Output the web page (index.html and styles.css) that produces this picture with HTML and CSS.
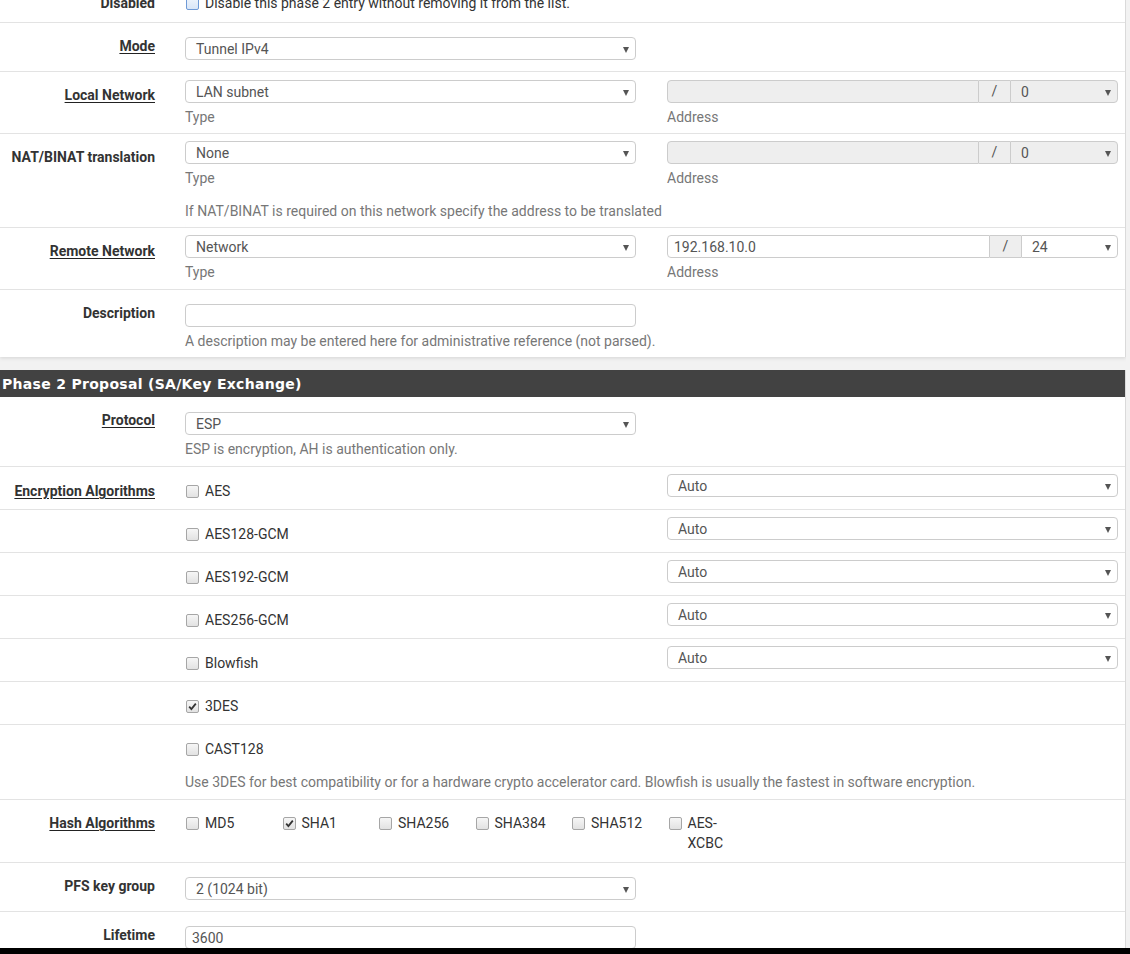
FILE: index.html
```html
<!DOCTYPE html>
<html>
<head>
<meta charset="utf-8">
<link rel="stylesheet" href="styles.css">
</head>
<body>
<div class="wrap">
  <div class="panel p1">
    <div class="row r-dis">
      <div class="lbl">Disabled</div>
      <div class="ctl">
        <div class="chk"><span class="box focus"></span><span class="txt">Disable this phase 2 entry without removing it from the list.</span></div>
      </div>
    </div>
    <div class="row">
      <div class="lbl"><span class="ul">Mode</span></div>
      <div class="ctl c-single">
        <div class="col"><div class="sel"><span>Tunnel IPv4</span><i class="arr"></i></div></div>
      </div>
    </div>
    <div class="row">
      <div class="lbl"><span class="ul">Local Network</span></div>
      <div class="ctl c-local">
        <div class="pair">
          <div class="col">
            <div class="sel"><span>LAN subnet</span><i class="arr"></i></div>
            <div class="help">Type</div>
          </div>
          <div class="col">
            <div class="grp">
              <div class="inp dis"></div>
              <div class="addon">/</div>
              <div class="sel dis w108"><span>0</span><i class="arr"></i></div>
            </div>
            <div class="help">Address</div>
          </div>
        </div>
      </div>
    </div>
    <div class="row">
      <div class="lbl">NAT/BINAT translation</div>
      <div class="ctl c-nat">
        <div class="pair">
          <div class="col">
            <div class="sel"><span>None</span><i class="arr"></i></div>
            <div class="help">Type</div>
          </div>
          <div class="col">
            <div class="grp">
              <div class="inp dis"></div>
              <div class="addon">/</div>
              <div class="sel dis w108"><span>0</span><i class="arr"></i></div>
            </div>
            <div class="help">Address</div>
          </div>
        </div>
        <div class="help help-gap">If NAT/BINAT is required on this network specify the address to be translated</div>
      </div>
    </div>
    <div class="row">
      <div class="lbl"><span class="ul">Remote Network</span></div>
      <div class="ctl c-remote">
        <div class="pair">
          <div class="col">
            <div class="sel"><span>Network</span><i class="arr"></i></div>
            <div class="help">Type</div>
          </div>
          <div class="col">
            <div class="grp">
              <div class="inp">192.168.10.0</div>
              <div class="addon">/</div>
              <div class="sel w97"><span>24</span><i class="arr"></i></div>
            </div>
            <div class="help">Address</div>
          </div>
        </div>
      </div>
    </div>
    <div class="row last">
      <div class="lbl">Description</div>
      <div class="ctl c-desc">
        <div class="col"><div class="inp"></div></div>
        <div class="help">A description may be entered here for administrative reference (not parsed).</div>
      </div>
    </div>
  </div>

  <div class="panel p2">
    <div class="phead">Phase 2 Proposal (SA/Key Exchange)</div>
    <div class="row">
      <div class="lbl"><span class="ul">Protocol</span></div>
      <div class="ctl c-proto">
        <div class="col"><div class="sel"><span>ESP</span><i class="arr"></i></div></div>
        <div class="help">ESP is encryption, AH is authentication only.</div>
      </div>
    </div>
    <div class="row">
      <div class="lbl lbl-enc"><span class="ul">Encryption Algorithms</span></div>
      <div class="ctl c-enc">
        <div class="pair">
          <div class="col"><div class="chk"><span class="box"></span><span class="txt">AES</span></div></div>
          <div class="col"><div class="sel"><span>Auto</span><i class="arr"></i></div></div>
        </div>
      </div>
    </div>
    <div class="row">
      <div class="lbl"></div>
      <div class="ctl c-enc">
        <div class="pair">
          <div class="col"><div class="chk"><span class="box"></span><span class="txt">AES128-GCM</span></div></div>
          <div class="col"><div class="sel"><span>Auto</span><i class="arr"></i></div></div>
        </div>
      </div>
    </div>
    <div class="row">
      <div class="lbl"></div>
      <div class="ctl c-enc">
        <div class="pair">
          <div class="col"><div class="chk"><span class="box"></span><span class="txt">AES192-GCM</span></div></div>
          <div class="col"><div class="sel"><span>Auto</span><i class="arr"></i></div></div>
        </div>
      </div>
    </div>
    <div class="row">
      <div class="lbl"></div>
      <div class="ctl c-enc">
        <div class="pair">
          <div class="col"><div class="chk"><span class="box"></span><span class="txt">AES256-GCM</span></div></div>
          <div class="col"><div class="sel"><span>Auto</span><i class="arr"></i></div></div>
        </div>
      </div>
    </div>
    <div class="row">
      <div class="lbl"></div>
      <div class="ctl c-enc">
        <div class="pair">
          <div class="col"><div class="chk"><span class="box"></span><span class="txt">Blowfish</span></div></div>
          <div class="col"><div class="sel"><span>Auto</span><i class="arr"></i></div></div>
        </div>
      </div>
    </div>
    <div class="row">
      <div class="lbl"></div>
      <div class="ctl c-chkonly">
        <div class="chk"><span class="box"><svg viewBox="0 0 11 11" width="11" height="11"><path d="M2.2 5.6 L4.4 8 L8.8 2.6" fill="none" stroke="#333" stroke-width="1.8"/></svg></span><span class="txt">3DES</span></div>
      </div>
    </div>
    <div class="row">
      <div class="lbl"></div>
      <div class="ctl c-cast">
        <div class="chk"><span class="box"></span><span class="txt">CAST128</span></div>
        <div class="help help-gap">Use 3DES for best compatibility or for a hardware crypto accelerator card. Blowfish is usually the fastest in software encryption.</div>
      </div>
    </div>
    <div class="row">
      <div class="lbl"><span class="ul">Hash Algorithms</span></div>
      <div class="ctl c-hash">
        <div class="hash">
          <div class="chk"><span class="box"></span><span class="txt">MD5</span></div>
          <div class="chk"><span class="box"><svg viewBox="0 0 11 11" width="11" height="11"><path d="M2.2 5.6 L4.4 8 L8.8 2.6" fill="none" stroke="#333" stroke-width="1.8"/></svg></span><span class="txt">SHA1</span></div>
          <div class="chk"><span class="box"></span><span class="txt">SHA256</span></div>
          <div class="chk"><span class="box"></span><span class="txt">SHA384</span></div>
          <div class="chk"><span class="box"></span><span class="txt">SHA512</span></div>
          <div class="chk narrow"><span class="box"></span><span class="txt">AES-XCBC</span></div>
        </div>
      </div>
    </div>
    <div class="row">
      <div class="lbl">PFS key group</div>
      <div class="ctl c-single">
        <div class="col"><div class="sel"><span>2 (1024 bit)</span><i class="arr"></i></div></div>
      </div>
    </div>
    <div class="row last r-life">
      <div class="lbl">Lifetime</div>
      <div class="ctl c-life">
        <div class="col"><div class="inp">3600</div></div>
      </div>
    </div>
  </div>
</div>
<div class="bar"></div>
</body>
</html>
```
FILE: styles.css
```css
* { box-sizing: border-box; }
html, body { margin: 0; padding: 0; }
body {
  background: #f2f2f2;
  font-family: Roboto, "Liberation Sans", Arial, sans-serif;
  font-size: 14px;
  line-height: 20px;
  color: #333;
  overflow: hidden;
  height: 954px;
}
.wrap { width: 1126px; height: 948px; overflow: hidden; }
.panel { background: #fff; border-right: 1px solid #dadada; }
.p1 { box-shadow: 0 1px 4px rgba(0, 0, 0, 0.13); margin-bottom: 13px; }
.phead {
  height: 27px;
  background: #424242;
  color: #fff;
  font-family: "DejaVu Sans", Verdana, sans-serif;
  font-weight: 700;
  font-size: 14px;
  letter-spacing: 0.3px;
  line-height: 28px;
  padding-left: 2px;
  white-space: nowrap;
}
.row { display: flex; border-bottom: 1px solid #e3e3e3; }
.row.last { border-bottom: none; }
.lbl {
  flex: 0 0 155px;
  text-align: right;
  font-weight: 700;
  padding-top: 13px;
  color: #333;
}
.lbl-enc { padding-top: 14px; }
.ul {
  text-decoration: underline;
  text-underline-offset: 2px;
  text-decoration-thickness: 1px;
  text-decoration-color: #222;
}
.ctl { flex: 0 0 933px; margin-left: 30px; }
.pair { display: flex; gap: 31px; align-items: flex-start; }
.col { flex: 0 0 451px; width: 451px; }

.sel {
  height: 23px;
  border: 1px solid #ccc;
  border-radius: 4px;
  display: flex;
  align-items: center;
  justify-content: space-between;
  padding: 1px 6px 0 10px;
  color: #555;
  background: #fff;
}
.arr {
  width: 0;
  height: 0;
  border-left: 3.5px solid transparent;
  border-right: 3.5px solid transparent;
  border-top: 6px solid #555;
  margin-top: 1px;
}
.inp {
  height: 23px;
  border: 1px solid #ccc;
  border-radius: 4px;
  padding: 0 6px;
  line-height: 22px;
  color: #555;
  background: #fff;
}
.dis { background: #eee; }
.grp { display: flex; height: 23px; }
.grp .inp { flex: 1; border-radius: 4px 0 0 4px; }
.grp .addon {
  flex: 0 0 31px;
  border-top: 1px solid #ccc;
  border-bottom: 1px solid #ccc;
  background: #eee;
  text-align: center;
  line-height: 21px;
  color: #555;
}
.grp .sel { border-radius: 0 4px 4px 0; }
.w108 { flex: 0 0 108px; }
.w97 { flex: 0 0 97px; }
.help { color: #777; margin-top: 4px; white-space: nowrap; }
.help-gap { margin-top: 13px; }

.chk { display: flex; align-items: flex-start; color: #333; }
.box {
  flex: none;
  width: 13px;
  height: 13px;
  margin: 4px 6px 0 1px;
  border: 1px solid #a6a6a6;
  border-radius: 2px;
  background: linear-gradient(#f6f6f6, #e2e2e2);
  display: flex;
  align-items: center;
  justify-content: center;
}
.box.focus { border-color: #6f9ad6; background: linear-gradient(#eef4fc, #d9e6f7); }

.r-dis { height: 23px; overflow: hidden; }
.r-dis .lbl { padding-top: 0; margin-top: -7px; }
.r-dis .ctl { margin-top: -7px; }

.c-single { padding: 14px 0 11px; }
.c-local { padding: 8px 0 6px; }
.c-nat { padding: 7px 0 6px; }
.c-remote { padding: 7px 0 7px; }
.c-desc { padding: 14px 0 6px; }
.c-proto { padding: 15px 0 7px; }
.c-enc { padding-top: 7px; height: 42px; }
.c-enc .chk { margin-top: 7px; }
.c-chkonly { padding: 14px 0 8px; }
.c-cast { padding: 14px 0 7px; }
.c-hash { padding: 13px 0 9px; }
.hash { display: flex; }
.hash .chk { flex: 0 0 96.5px; }
.hash .chk.narrow { flex: 0 0 78px; }
.r-life { height: 40px; overflow: hidden; }
.c-life { padding-top: 14px; }

.bar { height: 6px; background: #000; }
```
